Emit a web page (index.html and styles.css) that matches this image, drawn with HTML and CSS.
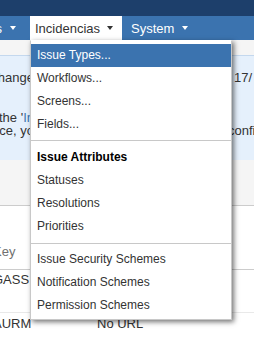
FILE: index.html
```html
<!DOCTYPE html>
<html lang="en">
<head>
    <meta charset="UTF-8">
    <title>Administration</title>
    <link rel="stylesheet" href="styles.css">
</head>
<body>
    <div class="topbar"></div>
    <nav class="nav">
        <div class="nav-cut">
            <a class="nav-item">Issues<span class="caret"></span></a>
        </div>
        <a class="nav-item active">Incidencias<span class="caret"></span></a>
        <a class="nav-item system">System<span class="caret"></span></a>
    </nav>

    <div class="page">
        <div class="strip"></div>
        <div class="info">
            <div class="msg-row">
                <div class="msg-l"><span>This scheme was last change</span></div>
                <div class="msg-r">17/</div>
            </div>
            <div class="msg-block">
                <div class="msg-row">
                    <div class="msg-l"><span>Edit the '<a class="link">In</a></span></div>
                    <div class="msg-r"></div>
                </div>
                <div class="msg-row">
                    <div class="msg-l"><span>instance, yo</span></div>
                    <div class="msg-r msg-r2">confi</div>
                </div>
            </div>
        </div>
        <div class="tabs-area"></div>

        <div class="table">
            <div class="row head">
                <div class="col-key">Key</div>
                <div class="col-url"></div>
            </div>
            <div class="row first">
                <div class="col-key">GASS</div>
                <div class="col-url"></div>
            </div>
            <div class="row">
                <div class="col-key">AURM</div>
                <div class="col-url">No URL</div>
            </div>
        </div>
    </div>

    <!-- open dropdown of the Incidencias menu -->
    <div class="dropdown">
        <ul class="section first-section">
            <li class="item selected">Issue Types...</li>
            <li class="item">Workflows...</li>
            <li class="item">Screens...</li>
            <li class="item">Fields...</li>
        </ul>
        <ul class="section mid-section">
            <li class="heading">Issue Attributes</li>
            <li class="item">Statuses</li>
            <li class="item">Resolutions</li>
            <li class="item">Priorities</li>
        </ul>
        <ul class="section last-section">
            <li class="item">Issue Security Schemes</li>
            <li class="item">Notification Schemes</li>
            <li class="item">Permission Schemes</li>
        </ul>
    </div>
</body>
</html>
```

FILE: styles.css
```css
body {
    margin: 0;
    width: 254px;
    height: 338px;
    overflow: hidden;
    position: relative;
    font-family: "Liberation Sans", Arial, sans-serif;
    font-size: 13px;
    color: #333;
    background: #fff;
}

.topbar {
    height: 16px;
    background: #1d3f6b;
}

.nav {
    height: 24px;
    background: #3b73af;
    display: flex;
}

.nav-cut {
    width: 30px;
    display: flex;
    justify-content: flex-end;
}

.nav-item {
    display: flex;
    align-items: center;
    white-space: nowrap;
    color: #fff;
    font-size: 13px;
    padding: 0 9px 0 5px;
}

.nav-cut .nav-item {
    padding-right: 14px;
}

.nav-item.active {
    background: #fff;
    color: #333;
    width: 78px;
}

.nav-item.system {
    padding-left: 9px;
}

.caret {
    width: 0;
    height: 0;
    margin-left: 8px;
    border-left: 3px solid transparent;
    border-right: 3px solid transparent;
    border-top: 4px solid currentColor;
}

.nav-item.active .caret {
    margin-left: 7px;
}

.strip {
    height: 15px;
    background: #f5f5f5;
    border-bottom: 1px solid #c4d8ee;
}

.info {
    background: #e5f0fc;
    padding: 14px 0 25px;
    height: 65px;
}

.msg-row {
    display: flex;
    line-height: 16px;
    white-space: nowrap;
}

.msg-l {
    width: 34px;
    display: flex;
    justify-content: flex-end;
}

.msg-r {
    margin-left: 200px;
}

.msg-r2 {
    margin-left: 194px;
}

.msg-block {
    margin-top: 25px;
}

.msg-block .msg-row {
    line-height: 13px;
}

.link {
    color: #3b73af;
}

.tabs-area {
    height: 45px;
    background: #f5f5f5;
    border-bottom: 1px solid #ccc;
}

.table {
    margin: 38px 0 0 -7px;
}

.row {
    display: flex;
    line-height: 16px;
    white-space: nowrap;
    padding: 3px 0 0;
}

.row.head {
    color: #707070;
    padding: 0 0 9px;
    border-bottom: 1px solid #ccc;
}

.row.first {
    padding: 2px 0 24px;
    border-bottom: 1px solid #e9e9e9;
}

.col-key {
    width: 104px;
}

.dropdown {
    position: absolute;
    left: 30px;
    top: 40px;
    width: 200px;
    background: #fff;
    border: 1px solid #c8c8c8;
    border-top-color: #fff;
    box-shadow: 2px 2px 5px rgba(0, 0, 0, 0.55);
    font-size: 12px;
}

.section {
    list-style: none;
    margin: 0;
    padding: 4px 0;
}

.first-section {
    padding-top: 3px;
    border-bottom: 1px solid #c8c8c8;
}

.mid-section {
    padding-bottom: 5px;
    border-bottom: 1px solid #c8c8c8;
}

.last-section {
    padding-bottom: 2px;
}

.item,
.heading {
    height: 23px;
    line-height: 23px;
    padding-left: 6px;
    white-space: nowrap;
}

.heading {
    height: 24px;
    line-height: 24px;
    font-weight: bold;
    color: #000;
}

.item.selected {
    background: #3b73af;
    color: #fff;
}
```
